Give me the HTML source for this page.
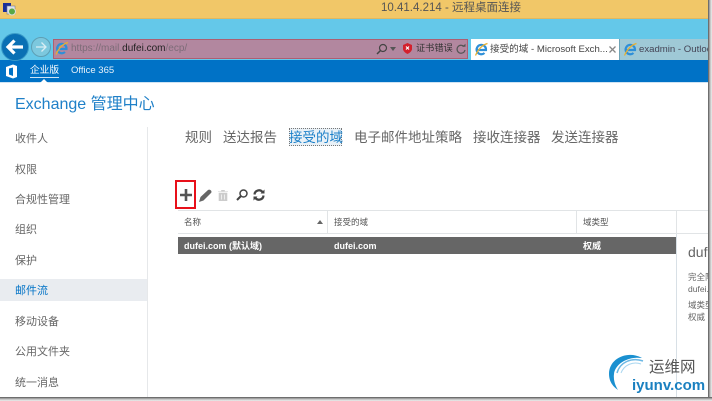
<!DOCTYPE html>
<html><head><meta charset="utf-8">
<style>
html,body{margin:0;padding:0;background:#fff}
#p{position:relative;width:712px;height:401px;overflow:hidden;background:#fff;font-family:"Liberation Sans","Noto Sans CJK SC",sans-serif}
#p div,#p svg{position:absolute}
.t{white-space:nowrap;line-height:1}
.n{left:15px;font-size:11px;color:#666}
.s{top:131px;font-size:13.5px;color:#666}
.h{top:218px;font-size:8.5px;color:#555}
.r{top:242px;font-size:9px;font-weight:bold;color:#fff}
</style></head><body><div id="p">
<div style="left:0;top:0;width:708px;height:19px;background:#f1c768"></div>
<div style="left:0;top:18px;width:708px;height:1px;background:#e0b860"></div>
<div style="left:0;top:19px;width:708px;height:41px;background:#64c8e9"></div>
<div style="left:0;top:60px;width:708px;height:22px;background:#0072c6"></div>
<div style="left:0;top:82px;width:708px;height:1px;background:#cfe3f3"></div>

<svg style="left:2px;top:2px" width="20" height="20" viewBox="0 0 20 20"><rect x="1" y="1" width="8" height="9" fill="#1a2f9a"/><rect x="5" y="4" width="8" height="8" fill="#dfe6f5" stroke="#778" stroke-width=".6"/><circle cx="10" cy="9.5" r="3.500" fill="#5aa846" stroke="#ddd"/></svg>

<div class="t" style="left:381px;top:3px;font-size:11.5px;color:#555">10.41.4.214 - 远程桌面连接</div>

<svg style="left:0;top:33px" width="52" height="28" viewBox="0 0 52 28">
<circle cx="15" cy="14" r="13.500" fill="#0a70b4" stroke="#3a9bc8"/>
<path d="M8 14H23M14.500 7.500L8 14l6.500 6.500" fill="none" stroke="#fff" stroke-width="3.200"/>
<circle cx="41" cy="14" r="9.500" fill="#7cc8de" stroke="#5e9fb4"/>
<path d="M36 14H46M41.500 9.500L46 14l-4.500 4.500" fill="none" stroke="#d8eef4" stroke-width="1.300"/>
</svg>

<div style="left:53px;top:39px;width:413px;height:18px;background:#b2879f;border:1px solid #ad5f72"></div>
<svg style="left:55px;top:41px" width="14" height="15" viewBox="0 0 14 15"><path d="M2.500 8H11.500A4.700 4.700 0 1 0 10 11" fill="none" stroke="#2e8fd8" stroke-width="2.200"/><path d="M1 13.500C3 9 7 3 13 1.500" fill="none" stroke="#e8b030" stroke-width="1.300"/></svg>
<div class="t" style="left:71px;top:44px;font-size:10px;color:#7d6c78">https://mail.<span style="color:#222">dufei.com</span>/ecp/</div>

<svg style="left:375px;top:42px" width="14" height="14" viewBox="0 0 14 14"><circle cx="8" cy="6" r="3.500" fill="none" stroke="#444" stroke-width="1.200"/><path d="M5.500 8.500L2 12" stroke="#444" stroke-width="1.500"/></svg>
<svg style="left:390px;top:47px" width="6" height="4" viewBox="0 0 6 4"><path d="M0 0H6L3 4Z" fill="#555"/></svg>
<svg style="left:403px;top:43px" width="9" height="11" viewBox="0 0 9 11"><path d="M4.500 0L9 2V6.500Q8 9.500 4.500 11Q1 9.500 0 6.500V2Z" fill="#d3202c"/><path d="M3 3.500L6 6.500M6 3.500L3 6.500" stroke="#fff" stroke-width="1.100"/></svg>
<div class="t" style="left:416px;top:44px;font-size:9.200px;color:#333">证书错误</div>
<svg style="left:455px;top:43px" width="12" height="12" viewBox="0 0 12 12"><path d="M9 3.500A4 4 0 1 0 10 7" fill="none" stroke="#555" stroke-width="1.200"/><path d="M7 3.800H10.500V.8Z" fill="#555"/></svg>

<div style="left:471px;top:39px;width:148px;height:21px;background:#fff"></div>
<svg style="left:474px;top:42px" width="15" height="15" viewBox="0 0 14 15"><path d="M2.500 8H11.500A4.700 4.700 0 1 0 10 11" fill="none" stroke="#2e8fd8" stroke-width="2.200"/><path d="M1 13.500C3 9 7 3 13 1.500" fill="none" stroke="#e8b030" stroke-width="1.300"/></svg>
<div class="t" style="left:490px;top:45px;font-size:9.600px;color:#444">接受的域 - Microsoft Exch...</div>
<svg style="left:609px;top:46px" width="7" height="7" viewBox="0 0 7 7"><path d="M.5 .5L6.500 6.500M6.500 .5L.5 6.500" stroke="#888" stroke-width="1.300"/></svg>
<div style="left:619px;top:39px;width:89px;height:21px;background:#9fc9d6;border-left:1px solid #6fa4b6;box-sizing:border-box"></div>
<svg style="left:623px;top:42px" width="15" height="15" viewBox="0 0 14 15"><path d="M2.500 8H11.500A4.700 4.700 0 1 0 10 11" fill="none" stroke="#2e8fd8" stroke-width="2.200"/><path d="M1 13.500C3 9 7 3 13 1.500" fill="none" stroke="#e8b030" stroke-width="1.300"/></svg>
<div class="t" style="left:639px;top:45px;font-size:9.600px;color:#445;width:69px;overflow:hidden">exadmin - Outlook</div>

<svg style="left:5px;top:64px" width="13" height="15" viewBox="0 0 13 15"><path d="M1 3L8 .5L12 2V13L8 14.500L1 12V3ZM4 4.500V10.500L8 12V3.500Z" fill="#fff" fill-rule="evenodd"/></svg>
<div class="t" style="left:30px;top:66px;font-size:9.700px;color:#fff">企业版</div>
<div style="left:30px;top:77px;width:29px;height:1px;background:#cfe4f4"></div>
<svg style="left:40px;top:79px" width="8" height="4" viewBox="0 0 8 4"><path d="M0 4L4 0L8 4Z" fill="#fff"/></svg>
<div class="t" style="left:71px;top:66px;font-size:9.500px;color:#e8f2fa">Office 365</div>

<div class="t" style="left:15px;top:97px;font-size:16px;color:#1f80c8">Exchange 管理中心</div>

<div class="t n" style="top:134px">收件人</div>
<div class="t n" style="top:165px">权限</div>
<div class="t n" style="top:195px">合规性管理</div>
<div class="t n" style="top:225px">组织</div>
<div class="t n" style="top:256px">保护</div>
<div style="left:0;top:279px;width:147px;height:22px;background:#e9ecf0"></div>
<div class="t n" style="top:286px;color:#0072c6">邮件流</div>
<div class="t n" style="top:317px">移动设备</div>
<div class="t n" style="top:347px">公用文件夹</div>
<div class="t n" style="top:378px">统一消息</div>
<div style="left:147px;top:127px;width:1px;height:270px;background:#e6e8ea"></div>

<div class="t s" style="left:185px">规则</div>
<div class="t s" style="left:223px">送达报告</div>
<div style="left:289px;top:128px;width:53px;height:18px;border:1px dotted #777;box-sizing:border-box;background:#e9f1f7"></div>
<div class="t s" style="left:289px;color:#1a7fc8">接受的域</div>
<div class="t s" style="left:354px">电子邮件地址策略</div>
<div class="t s" style="left:473px">接收连接器</div>
<div class="t s" style="left:551px">发送连接器</div>

<div style="left:175px;top:180px;width:21px;height:29px;border:2px solid #e8101a;box-sizing:border-box"></div>
<svg style="left:180px;top:189px" width="12" height="12" viewBox="0 0 12 12"><path d="M6 0V12M0 6H12" stroke="#555" stroke-width="2.600"/></svg>
<svg style="left:199px;top:189px" width="13" height="13" viewBox="0 0 13 13"><path d="M0 13L1.500 8L9 1Q10.500 0 12 1.500Q13 3 12 4L4.500 11.500Z" fill="#666"/></svg>
<svg style="left:218px;top:190px" width="10" height="11" viewBox="0 0 10 11"><path d="M0 1.500H10M3.500 1.500V0H6.500V1.500M1 3H9V11H1Z" fill="#ccc" stroke="#ccc" stroke-width=".6"/><path d="M3.500 4.500V9.500M6.500 4.500V9.500" stroke="#eee"/></svg>
<svg style="left:236px;top:189px" width="12" height="12" viewBox="0 0 12 12"><circle cx="7.500" cy="4.500" r="3.500" fill="none" stroke="#444" stroke-width="1.500"/><path d="M5 7L1 11" stroke="#444" stroke-width="2"/></svg>
<svg style="left:253px;top:189px" width="12" height="12" viewBox="0 0 12 12"><path d="M1.500 5.500A4.500 4.500 0 0 1 9.500 3M10.500 6.500A4.500 4.500 0 0 1 2.500 9" fill="none" stroke="#444" stroke-width="2.200"/><path d="M7.500 4.500H11.500V.5ZM4.500 7.500H.5V11.500Z" fill="#444"/></svg>

<div style="left:178px;top:210px;width:530px;height:1px;background:#e1e4e6"></div>
<div style="left:178px;top:233px;width:530px;height:1px;background:#e1e4e6"></div>
<div style="left:327px;top:211px;width:1px;height:22px;background:#e1e4e6"></div>
<div style="left:576px;top:211px;width:1px;height:22px;background:#e1e4e6"></div>
<div style="left:676px;top:211px;width:1px;height:22px;background:#e1e4e6"></div>
<div class="t h" style="left:184px">名称</div>
<svg style="left:317px;top:220px" width="6" height="4" viewBox="0 0 6 4"><path d="M0 4L3 0L6 4Z" fill="#666"/></svg>
<div class="t h" style="left:334px">接受的域</div>
<div class="t h" style="left:583px">域类型</div>

<div style="left:178px;top:237px;width:498px;height:17px;background:#666"></div>
<div class="t r" style="left:184px">dufei.com (默认域)</div>
<div class="t r" style="left:334px">dufei.com</div>
<div class="t r" style="left:583px">权威</div>

<div style="left:676px;top:234px;width:1px;height:163px;background:#d8e0e6"></div>
<div style="left:688px;top:244px;width:20px;height:100px;overflow:hidden">
<div class="t" style="left:0;top:1px;font-size:14px;color:#666">dufei</div>
<div class="t" style="left:0;top:29px;font-size:8.5px;color:#666">完全限定</div>
<div class="t" style="left:0;top:41px;font-size:8.5px;color:#666">dufei.com</div>
<div class="t" style="left:0;top:57px;font-size:8.5px;color:#666">域类型</div>
<div class="t" style="left:0;top:69px;font-size:8.5px;color:#666">权威</div>
</div>

<svg style="left:606px;top:352px" width="42" height="42" viewBox="0 0 42 42"><path d="M36 6C22-2 3 6 3 22Q3 32 12 38Q7 30 8 22C9 12 22 4 36 6Z" fill="#1a90d0"/><path d="M37 9C26 5 14 10 11 21" fill="none" stroke="#6cb8e4" stroke-width="1.500"/><path d="M35 12C27 9 18 13 15 21" fill="none" stroke="#a8d6f0" stroke-width="1"/></svg>
<div class="t" style="left:649px;top:360px;font-size:15.500px;color:#555">运维网</div>
<div class="t" style="left:632px;top:378px;font-size:15px;font-weight:bold;color:#1a80c0">iyunv.com</div>

<div style="left:708px;top:0;width:4px;height:401px;background:linear-gradient(90deg,#555,#bbb 50%,#eee)"></div>
<div style="left:0;top:397px;width:712px;height:4px;background:linear-gradient(180deg,#555,#bbb 50%,#eee)"></div>
</div></body></html>
